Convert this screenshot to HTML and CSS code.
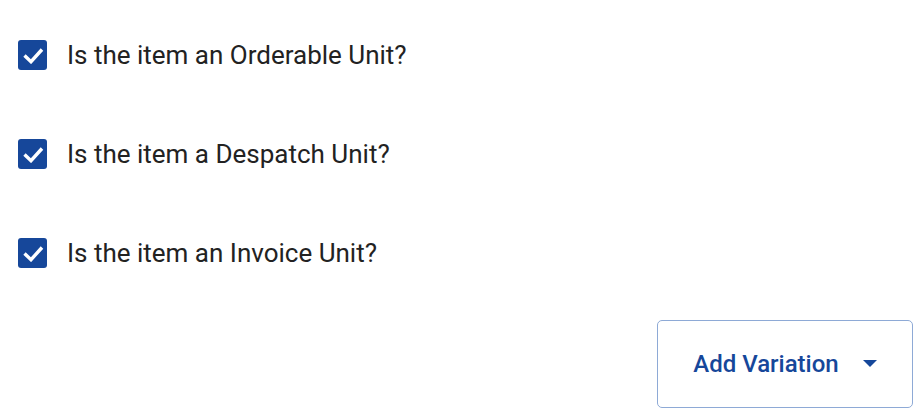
FILE: index.html
```html
<!DOCTYPE html>
<html lang="en">
<head>
    <meta charset="UTF-8">
    <title>Unit options</title>
    <link rel="stylesheet" href="styles.css">
</head>
<body>
    <div class="units">
        <label class="unit-row">
            <span class="tick"><svg width="22" height="18" viewBox="0 0 22 18"><path d="M2.5 9.5l6.5 6.2L20 3.5" fill="none" stroke="#fff" stroke-width="3.4"/></svg></span>
            <span class="unit-text">Is the item an Orderable Unit?</span>
        </label>
        <label class="unit-row">
            <span class="tick"><svg width="22" height="18" viewBox="0 0 22 18"><path d="M2.5 9.5l6.5 6.2L20 3.5" fill="none" stroke="#fff" stroke-width="3.4"/></svg></span>
            <span class="unit-text">Is the item a Despatch Unit?</span>
        </label>
        <label class="unit-row">
            <span class="tick"><svg width="22" height="18" viewBox="0 0 22 18"><path d="M2.5 9.5l6.5 6.2L20 3.5" fill="none" stroke="#fff" stroke-width="3.4"/></svg></span>
            <span class="unit-text">Is the item an Invoice Unit?</span>
        </label>
    </div>
    <div class="actions">
        <button class="add-btn" type="button">
            Add Variation
            <svg width="14" height="8" viewBox="0 0 14 8"><path d="M0 0h14L7 7z" fill="#16479a"/></svg>
        </button>
    </div>
</body>
</html>
```

FILE: styles.css
```css
*{padding: 0;margin: 0;box-sizing: border-box;}
body{
    font-family: Roboto, "Liberation Sans", sans-serif;
    color: #222;
    background: #fff;
}
.units{
    padding-top: 40px;
    padding-left: 18px;
    display: flex;
    flex-direction: column;
    gap: 69px;
}
.unit-row{
    display: flex;
    align-items: center;
    gap: 20px;
    height: 30px;
}
.tick{
    width: 29px;
    height: 30px;
    background: #16479a;
    border-radius: 3px;
    display: flex;
    align-items: center;
    justify-content: center;
}
.unit-text{
    font-size: 26px;
    color: #222;
}
.actions{
    display: flex;
    justify-content: flex-end;
    padding-top: 52px;
    padding-right: 1px;
}
.add-btn{
    width: 256px;
    height: 88px;
    border: 1px solid #8eaad6;
    border-radius: 5px;
    background: #fff;
    color: #16479a;
    font-family: Roboto, "Liberation Sans", sans-serif;
    font-size: 24px;
    font-weight: 500;
    display: flex;
    align-items: center;
    justify-content: center;
    gap: 24px;
}
```
